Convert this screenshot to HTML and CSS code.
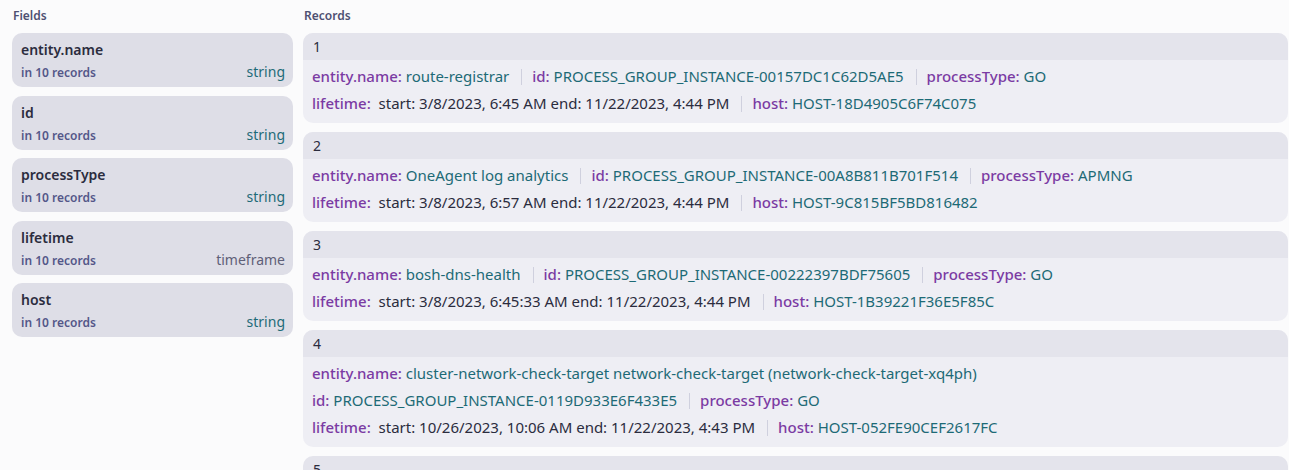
FILE: index.html
```html
<!DOCTYPE html>
<html>
<head>
<meta charset="utf-8">
<link rel="stylesheet" href="styles.css">
</head>
<body>
<div class="layout">
  <aside class="fields">
    <div class="section-title">Fields</div>
    <div class="field-list">
      <div class="field"><div class="field-name">entity.name</div><div class="field-meta"><span class="count">in 10 records</span><span class="type">string</span></div></div>
      <div class="field"><div class="field-name">id</div><div class="field-meta"><span class="count">in 10 records</span><span class="type">string</span></div></div>
      <div class="field"><div class="field-name">processType</div><div class="field-meta"><span class="count">in 10 records</span><span class="type">string</span></div></div>
      <div class="field"><div class="field-name">lifetime</div><div class="field-meta"><span class="count">in 10 records</span><span class="type type-tf">timeframe</span></div></div>
      <div class="field"><div class="field-name">host</div><div class="field-meta"><span class="count">in 10 records</span><span class="type">string</span></div></div>
    </div>
  </aside>
  <main class="records">
    <div class="section-title">Records</div>
    <div class="record-list">
      <div class="record">
        <div class="record-head">1</div>
        <div class="record-body">
          <div class="line"><span class="k">entity.name:</span> <span class="v">route-registrar</span><span class="sep"></span><span class="k">id:</span> <span class="v">PROCESS_GROUP_INSTANCE-00157DC1C62D5AE5</span><span class="sep"></span><span class="k">processType:</span> <span class="v">GO</span></div>
          <div class="line"><span class="k">lifetime:</span> <span class="t">&nbsp;start: 3/8/2023, 6:45 AM end: 11/22/2023, 4:44 PM</span><span class="sep"></span><span class="k">host:</span> <span class="v">HOST-18D4905C6F74C075</span></div>
        </div>
      </div>
      <div class="record">
        <div class="record-head">2</div>
        <div class="record-body">
          <div class="line"><span class="k">entity.name:</span> <span class="v">OneAgent log analytics</span><span class="sep"></span><span class="k">id:</span> <span class="v">PROCESS_GROUP_INSTANCE-00A8B811B701F514</span><span class="sep"></span><span class="k">processType:</span> <span class="v">APMNG</span></div>
          <div class="line"><span class="k">lifetime:</span> <span class="t">&nbsp;start: 3/8/2023, 6:57 AM end: 11/22/2023, 4:44 PM</span><span class="sep"></span><span class="k">host:</span> <span class="v">HOST-9C815BF5BD816482</span></div>
        </div>
      </div>
      <div class="record">
        <div class="record-head">3</div>
        <div class="record-body">
          <div class="line"><span class="k">entity.name:</span> <span class="v">bosh-dns-health</span><span class="sep"></span><span class="k">id:</span> <span class="v">PROCESS_GROUP_INSTANCE-00222397BDF75605</span><span class="sep"></span><span class="k">processType:</span> <span class="v">GO</span></div>
          <div class="line"><span class="k">lifetime:</span> <span class="t">&nbsp;start: 3/8/2023, 6:45:33 AM end: 11/22/2023, 4:44 PM</span><span class="sep"></span><span class="k">host:</span> <span class="v">HOST-1B39221F36E5F85C</span></div>
        </div>
      </div>
      <div class="record">
        <div class="record-head">4</div>
        <div class="record-body">
          <div class="line"><span class="k">entity.name:</span> <span class="v">cluster-network-check-target network-check-target (network-check-target-xq4ph)</span></div>
          <div class="line"><span class="k">id:</span> <span class="v">PROCESS_GROUP_INSTANCE-0119D933E6F433E5</span><span class="sep"></span><span class="k">processType:</span> <span class="v">GO</span></div>
          <div class="line"><span class="k">lifetime:</span> <span class="t">&nbsp;start: 10/26/2023, 10:06 AM end: 11/22/2023, 4:43 PM</span><span class="sep"></span><span class="k">host:</span> <span class="v">HOST-052FE90CEF2617FC</span></div>
        </div>
      </div>
      <div class="record">
        <div class="record-head">5</div>
      </div>
    </div>
  </main>
</div>
</body>
</html>
```
FILE: styles.css
```css
html, body {
  margin: 0;
  padding: 0;
  background: #fbfbfc;
  overflow: hidden;
  height: 470px;
}
body {
  font-family: "Noto Sans", "Open Sans", sans-serif;
  color: #2b2c3e;
}
.layout {
  display: grid;
  grid-template-columns: 281px 1fr;
  column-gap: 10px;
  padding: 0 1px 0 12px;
}
.section-title {
  font-size: 12px;
  font-weight: 600;
  color: #4e5072;
  height: 33px;
  line-height: 31px;
  padding-left: 1px;
}
.field-list {
  display: flex;
  flex-direction: column;
  gap: 8.6px;
}
.field {
  background: #dedee7;
  border-radius: 10px;
  height: 54px;
  box-sizing: border-box;
  padding: 7px 8px 0 9px;
}
.field-name {
  font-size: 14px;
  font-weight: 600;
  color: #2b2c3e;
  line-height: 20px;
}
.field-meta {
  display: flex;
  justify-content: space-between;
  align-items: baseline;
  margin-top: 2px;
}
.count {
  font-size: 12px;
  font-weight: 600;
  color: #545789;
  line-height: 20px;
}
.type {
  font-size: 14px;
  color: #1e6b78;
  line-height: 20px;
}
.type-tf {
  color: #5f6078;
}
.record-list {
  display: flex;
  flex-direction: column;
  gap: 9px;
}
.record {
  border-radius: 10px;
  overflow: hidden;
  background: #eeeef4;
}
.record-head {
  background: #e4e4ec;
  height: 27px;
  line-height: 27px;
  font-size: 14px;
  padding-left: 10px;
  color: #2b2c3e;
}
.record-body {
  padding: 6px 9px 10px 9px;
  display: flex;
  flex-direction: column;
  gap: 7px;
}
.line {
  font-size: 15px;
  line-height: 20px;
  white-space: nowrap;
}
.k {
  color: #7b3ba3;
  font-weight: 500;
}
.v {
  color: #1d6a76;
}
.t {
  color: #2b2c3e;
}
.sep {
  display: inline-block;
  width: 1px;
  height: 16px;
  background: #cfd0de;
  vertical-align: -3px;
  margin: 0 10px 0 12px;
}
```
